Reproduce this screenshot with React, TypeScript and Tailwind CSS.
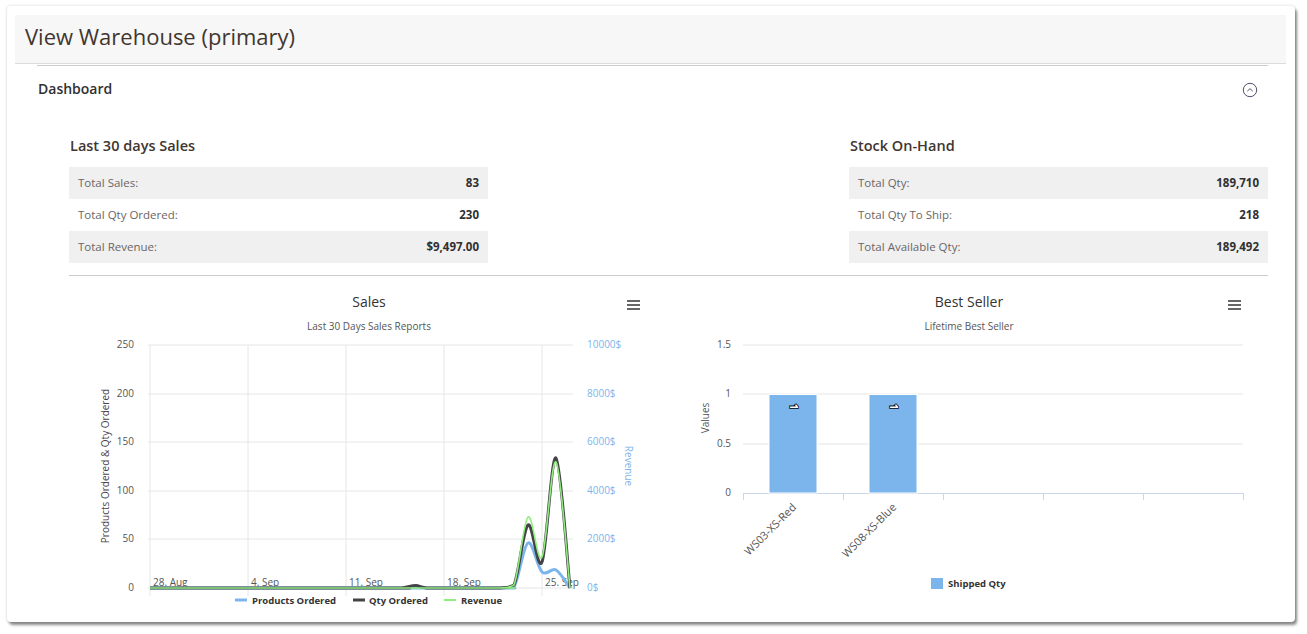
import React from "react";

type Pt = [number, number];

function spline(pts: Pt[], floor: number): string {
  let d = `M${pts[0][0]},${pts[0][1]}`;
  for (let i = 0; i < pts.length - 1; i++) {
    const p0 = pts[i - 1] || pts[i];
    const p1 = pts[i];
    const p2 = pts[i + 1];
    const p3 = pts[i + 2] || p2;
    const c1x = p1[0] + (p2[0] - p0[0]) / 6;
    const c1y = Math.min(floor, p1[1] + (p2[1] - p0[1]) / 6);
    const c2x = p2[0] - (p3[0] - p1[0]) / 6;
    const c2y = Math.min(floor, p2[1] - (p3[1] - p1[1]) / 6);
    d += ` C${c1x},${c1y} ${c2x},${c2y} ${p2[0]},${p2[1]}`;
  }
  return d;
}

const FONT = "'Open Sans', 'Liberation Sans', Arial, sans-serif";

function MenuIcon({ x, y }: { x: number; y: number }) {
  return (
    <g stroke="#666" strokeWidth={2} strokeLinecap="butt">
      <line x1={x} y1={y - 4} x2={x + 13} y2={y - 4} />
      <line x1={x} y1={y} x2={x + 13} y2={y} />
      <line x1={x} y1={y + 4} x2={x + 13} y2={y + 4} />
    </g>
  );
}

function SalesChart() {
  const hy = [60, 109, 157, 206, 254, 303];
  const vx = [81, 179, 277, 375, 473];
  const leftLabels = ["250", "200", "150", "100", "50", "0"];
  const rightLabels = ["10000$", "8000$", "6000$", "4000$", "2000$", "0$"];
  const xLabels = ["28. Aug", "4. Sep", "11. Sep", "18. Sep", "25. Sep"];
  const black: Pt[] = [
    [81, 303], [319, 303], [333, 303], [347, 300.5], [361, 303], [417, 303], [431, 303], [445, 300], [459, 240], [473, 277], [487, 173], [501, 303],
  ];
  const blue: Pt[] = [
    [81, 303], [417, 303], [431, 303], [445, 302], [459, 258], [473, 287], [487, 285], [501, 303],
  ];
  const green: Pt[] = [
    [81, 303], [417, 303], [431, 303], [445, 300], [459, 232], [473, 272], [487, 177], [501, 303],
  ];
  return (
    <svg width={600} height={330} style={{ fontFamily: FONT }}>
      <text x={300} y={22} textAnchor="middle" fontSize={14} fill="#333">Sales</text>
      <text x={300} y={45} textAnchor="middle" fontSize={10} fill="#555">Last 30 Days Sales Reports</text>
      <MenuIcon x={558} y={20} />
      {hy.map((y) => (
        <line key={y} x1={79} x2={504} y1={y} y2={y} stroke="#e6e6e6" strokeWidth={1} />
      ))}
      {vx.map((x) => (
        <line key={x} x1={x} x2={x} y1={60} y2={311} stroke="#e6e6e6" strokeWidth={1} />
      ))}
      {leftLabels.map((l, i) => (
        <text key={l} x={65} y={hy[i] + 3} textAnchor="end" fontSize={10} fill="#555">{l}</text>
      ))}
      {rightLabels.map((l, i) => (
        <text key={l} x={518} y={hy[i] + 2.5} fontSize={10} fill="#7cb5ec">{l}</text>
      ))}
      <text x={0} y={0} transform="translate(40,181) rotate(-90)" textAnchor="middle" fontSize={10} fill="#4a3f4a">
        Products Ordered &amp; Qty Ordered
      </text>
      <text x={0} y={0} transform="translate(556,181) rotate(90)" textAnchor="middle" fontSize={10} fill="#7cb5ec">
        Revenue
      </text>
      {xLabels.map((l, i) => (
        <text key={l} x={vx[i] + 3} y={301} fontSize={10} fill="#555">{l}</text>
      ))}
      <path d={spline(blue, 303)} fill="none" stroke="#7cb5ec" strokeWidth={3} />
      <path d={spline(black, 303)} fill="none" stroke="#434348" strokeWidth={3} />
      <path d={spline(green, 303)} fill="none" stroke="#90ed7d" strokeWidth={1.6} />
      <line x1={166} x2={178} y1={315} y2={315} stroke="#7cb5ec" strokeWidth={3} />
      <text x={183} y={318.5} fontSize={9.5} fontWeight={700} fill="#333">Products Ordered</text>
      <line x1={284} x2={296} y1={315} y2={315} stroke="#434348" strokeWidth={3} />
      <text x={300} y={318.5} fontSize={9.5} fontWeight={700} fill="#333">Qty Ordered</text>
      <line x1={375} x2={387} y1={315} y2={315} stroke="#90ed7d" strokeWidth={2} />
      <text x={392} y={318.5} fontSize={9.5} fontWeight={700} fill="#333">Revenue</text>
    </svg>
  );
}

function BestSellerChart() {
  const hy = [60, 109, 159, 208];
  const labels = ["1.5", "1", "0.5", "0"];
  const ticks = [74, 174, 274, 374, 474, 574];
  const bars = [
    { x: 100, name: "WS03-XS-Red" },
    { x: 200, name: "WS08-XS-Blue" },
  ];
  return (
    <svg width={600} height={330} style={{ fontFamily: FONT }}>
      <text x={300} y={22} textAnchor="middle" fontSize={14} fill="#333">Best Seller</text>
      <text x={300} y={45} textAnchor="middle" fontSize={10} fill="#555">Lifetime Best Seller</text>
      <MenuIcon x={559} y={20} />
      {hy.slice(0, 3).map((y) => (
        <line key={y} x1={74} x2={574} y1={y} y2={y} stroke="#e6e6e6" strokeWidth={1} />
      ))}
      <line x1={74} x2={575} y1={208.5} y2={208.5} stroke="#ccd6eb" strokeWidth={1} />
      {ticks.map((x) => (
        <line key={x} x1={x + 0.5} x2={x + 0.5} y1={208} y2={215} stroke="#ccd6eb" strokeWidth={1} />
      ))}
      {labels.map((l, i) => (
        <text key={l} x={62} y={hy[i] + 3} textAnchor="end" fontSize={10} fill="#555">{l}</text>
      ))}
      <text x={0} y={0} transform="translate(40,133) rotate(-90)" textAnchor="middle" fontSize={10} fill="#555">
        Values
      </text>
      {bars.map((b) => (
        <g key={b.name}>
          <rect x={b.x} y={109.5} width={48} height={98.5} fill="#7cb5ec" stroke="#ffffff" strokeWidth={1} />
          <text
            x={0}
            y={0}
            transform={`translate(${b.x + 20.5},121.5) rotate(90)`}
            textAnchor="middle"
            fontSize={10}
            fontWeight={700}
            fill="#fff"
            stroke="#000"
            strokeWidth={1.6}
            paintOrder="stroke"
          >
            1
          </text>
          <text
            x={0}
            y={0}
            transform={`translate(${b.x + 28},223) rotate(-45)`}
            textAnchor="end"
            fontSize={11}
            fill="#555"
          >
            {b.name}
          </text>
        </g>
      ))}
      <rect x={262} y={293} width={12} height={11} fill="#7cb5ec" />
      <text x={279} y={302} fontSize={9.5} fontWeight={700} fill="#333">Shipped Qty</text>
    </svg>
  );
}

function StatTable({ title, rows }: { title: string; rows: [string, string][] }) {
  return (
    <div className="w-[419px]">
      <div className="h-[20px] flex items-center text-[14.5px] font-semibold text-[#41362f] mb-[11px] pl-[1px]">{title}</div>
      <div className="flex flex-col">
        {rows.map(([k, v], i) => (
          <div
            key={k}
            className={`h-[32px] flex items-center justify-between px-[9px] ${i % 2 === 0 ? "bg-[#f0f0f0]" : "bg-white"}`}
          >
            <span className="text-[11.5px] text-[#6b6565]">{k}</span>
            <span className="text-[11.5px] font-bold text-[#303030]">{v}</span>
          </div>
        ))}
      </div>
    </div>
  );
}

export default function App() {
  return (
    <div className="w-[1307px] h-[634px] bg-white pl-[7px] pt-[6px]" style={{ fontFamily: FONT }}>
      <div className="w-[1288px] h-[616px] bg-white rounded-[4px] shadow-[2px_3px_3px_rgba(0,0,0,0.45),0_0_3px_rgba(0,0,0,0.18)] pl-[8px] pr-[9px] pt-[9px]">
        <div className="h-[49px] bg-[#f7f7f7] border-b border-[#dcdcdc] flex items-center pl-[10px]">
          <h1 className="text-[22px] text-[#41362f] leading-none pb-[7px]">View Warehouse (primary)</h1>
        </div>
        <div className="mt-[1px] ml-[22px] mr-[18px] border-t border-[#cccccc]">
          <div className="h-[46px] flex items-center justify-between pl-[1px]">
            <span className="text-[14px] font-semibold text-[#303030] pb-[2px]">Dashboard</span>
            <svg width={16} height={16} viewBox="0 0 16 16" className="mr-[10px] mt-[2px]">
              <circle cx={8} cy={8} r={6.7} fill="none" stroke="#41385a" strokeWidth={0.9} />
              <path d="M5.3 9.2 L8 6.6 L10.7 9.2" fill="none" stroke="#41385a" strokeWidth={0.9} />
            </svg>
          </div>
          <div className="pl-[32px] pt-[24px]">
            <div className="flex justify-between">
              <StatTable
                title="Last 30 days Sales"
                rows={[
                  ["Total Sales:", "83"],
                  ["Total Qty Ordered:", "230"],
                  ["Total Revenue:", "$9,497.00"],
                ]}
              />
              <StatTable
                title="Stock On-Hand"
                rows={[
                  ["Total Qty:", "189,710"],
                  ["Total Qty To Ship:", "218"],
                  ["Total Available Qty:", "189,492"],
                ]}
              />
            </div>
            <div className="mt-[12px] border-t border-[#cccccc] pt-[9px] grid grid-cols-2">
              <SalesChart />
              <BestSellerChart />
            </div>
          </div>
        </div>
      </div>
    </div>
  );
}
